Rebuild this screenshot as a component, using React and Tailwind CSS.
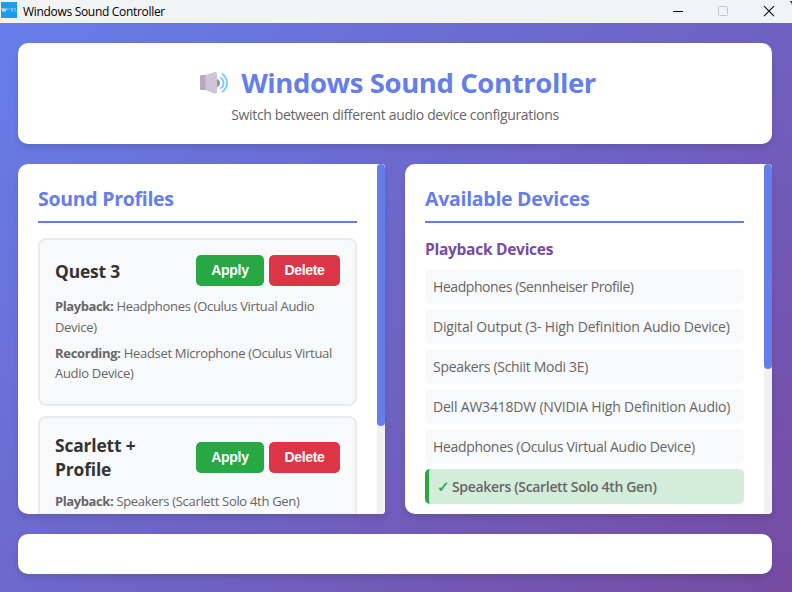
const profiles = [
  {
    name: 'Quest 3',
    playback: 'Headphones (Oculus Virtual Audio Device)',
    recording: 'Headset Microphone (Oculus Virtual Audio Device)',
  },
  {
    name: 'Scarlett + Profile',
    playback: 'Speakers (Scarlett Solo 4th Gen)',
  },
];

const devices = [
  { name: 'Headphones (Sennheiser Profile)', tracking: 'tracking-[-0.43px]' },
  { name: 'Digital Output (3- High Definition Audio Device)', tracking: 'tracking-[-0.18px]' },
  { name: 'Speakers (Schiit Modi 3E)', tracking: 'tracking-[-0.3px]' },
  { name: 'Dell AW3418DW (NVIDIA High Definition Audio)', tracking: 'tracking-[-0.2px]' },
  { name: 'Headphones (Oculus Virtual Audio Device)', tracking: 'tracking-[-0.32px]' },
];

function TitleBar() {
  return (
    <div className="flex h-[23px] shrink-0 items-center bg-[#f1f3f5] text-black">
      <div className="ml-px mb-[3px] flex h-4 w-4 items-center justify-center bg-[#1c9cf0]">
        <svg width="16" height="16" viewBox="0 0 16 16" fill="none" stroke="#fff" strokeWidth="0.9" opacity="0.9">
          <path d="M1 6 2 9.500 3 6.500 4 9.500 5.500 6M6.300 7.500H7.300M8.200 6.700H9.200M11 6V9.500M14 6V7.500M14 8.500V9.500" />
        </svg>
      </div>
      <div className="ml-1.5 flex-1 whitespace-nowrap text-[12px] leading-[21px] tracking-[-0.31px]">Windows Sound Controller</div>
      <svg width="119" height="22" viewBox="0 0 119 22" fill="none">
        <path d="M0 10.500H10" stroke="#000" />
        <rect x="45.500" y="5.500" width="9" height="9" rx="1" stroke="#c3c5c7" />
        <path d="M91 5.200 101 15.200M101 5.200 91 15.200" stroke="#111" strokeWidth="1.200" />
        <path d="M116.500 0H119V4Q118.500 1 116.500 0" fill="#333" />
      </svg>
    </div>
  );
}

function Speaker() {
  return (
    <svg width="30" height="26" viewBox="0 0 30 26" className="mr-[12px] shrink-0">
      <path d="M18 9Q21 10 21 13T18 17Z" fill="#998ea4" />
      <path d="M2 5H8V20H2Q1 20 1 19V6Q1 5 2 5Z" fill="#b4acbc" />
      <path d="M6.500 5 15.500 2Q18 1.500 18 3.500V22Q18 24 15.500 23.500L6.500 20Z" fill="#cdc4d6" />
      <g fill="none" stroke="#83cbff" strokeWidth="2" strokeLinecap="round">
        <path d="M22 8Q24.500 9.500 24.500 13T22 18" />
        <path d="M23.500 4Q28 7.500 28 13T23.500 21.500" />
      </g>
    </svg>
  );
}

function Profile({ name, playback, recording }) {
  return (
    <div className="mb-2.5 rounded-lg border-2 border-[#e9ecef] bg-[#f8f9fa] p-[15px]">
      <div className="mb-2.5 flex items-center justify-between">
        <h3 className="w-[100px] text-[17.4px] leading-6 font-bold tracking-[-0.15px] text-[#333]">{name}</h3>
        <div className="flex gap-[5px] font-['Liberation_Sans',sans-serif] text-[14px] font-bold tracking-[-0.3px] text-white">
          <button className="h-[31px] w-[68px] rounded-[5px] bg-[#28a745]">Apply</button>
          <button className="h-[31px] w-[71px] rounded-[5px] bg-[#dc3545]">Delete</button>
        </div>
      </div>
      <div className="text-[13px] leading-[20.8px] tracking-[-0.31px] text-[#666]">
        <p className="mb-[5px]"><strong className="tracking-[-0.4px]">Playback:</strong> {playback}</p>
        {recording && <p className="mb-[5px]"><strong className="tracking-[-0.3px]">Recording:</strong> {recording}</p>}
      </div>
    </div>
  );
}

function Panel({ title, thumb, children }) {
  return (
    <section className="flex h-[350px] w-[367px] overflow-hidden rounded-[10px] rounded-r-[4px] bg-white shadow-[0_4px_6px_rgba(0,0,0,0.1)]">
      <div className="h-full min-w-0 flex-1 overflow-hidden p-5">
        <h2 className="mb-[15px] border-b-2 border-[#667eea] pt-px pb-[9px] text-[19.5px] leading-[27px] font-bold tracking-[-0.28px] text-[#667eea]">{title}</h2>
        {children}
      </div>
      <div className="h-full w-2 bg-[#f1f1f1]">
        <div className={`w-2 rounded-[4px] bg-[#667eea] ${thumb}`} />
      </div>
    </section>
  );
}

export default function App() {
  return (
    <div className="flex h-[592px] w-[792px] flex-col overflow-hidden font-['Open_Sans',sans-serif]">
      <TitleBar />
      <main className="flex flex-1 flex-col gap-5 bg-[linear-gradient(135deg,#667eea_0%,#764ba2_100%)] pt-5 pr-5 pl-[18px]">
        <header className="flex h-[101px] shrink-0 flex-col items-center rounded-[10px] bg-white pt-5 shadow-[0_4px_6px_rgba(0,0,0,0.1)]">
          <div className="flex h-10 items-center pl-[5px]">
            <Speaker />
            <h1 className="text-[27.5px] leading-10 font-bold whitespace-nowrap tracking-[-0.4px] text-[#667eea]">Windows Sound Controller</h1>
          </div>
          <p className="mt-0.5 text-[14px] leading-5 tracking-[-0.355px] text-[#666]">Switch between different audio device configurations</p>
        </header>
        <div className="flex h-[350px] shrink-0 gap-5">
          <Panel title="Sound Profiles" thumb="h-[262px]">
            {profiles.map((p) => <Profile key={p.name} {...p} />)}
          </Panel>
          <Panel title="Available Devices" thumb="h-[205px]">
            <h3 className="mb-2 text-[15.5px] leading-[23px] font-bold tracking-[-0.27px] text-[#764ba2]">Playback Devices</h3>
            <ul className="flex flex-col gap-[5px] text-[14px] leading-[36px] tracking-[-0.33px] whitespace-nowrap text-[#666]">
              {devices.map((d) => <li key={d.name} className={`h-[35px] rounded-[5px] bg-[#f8f9fa] pl-2 ${d.tracking}`}>{d.name}</li>)}
              <li className="flex h-[35px] rounded-[5px] border-l-4 border-[#28a745] bg-[#d4edda] pl-2 font-semibold">
                <span className="w-[15px] font-['DejaVu_Sans',sans-serif] text-[15px] font-bold text-[#28a745] [-webkit-text-stroke:0.4px_#28a745]">✓</span>
                <span>Speakers (Scarlett Solo 4th Gen)</span>
              </li>
            </ul>
          </Panel>
        </div>
        <footer className="h-10 shrink-0 rounded-[10px] bg-white shadow-[0_4px_6px_rgba(0,0,0,0.1)]" />
      </main>
    </div>
  );
}
